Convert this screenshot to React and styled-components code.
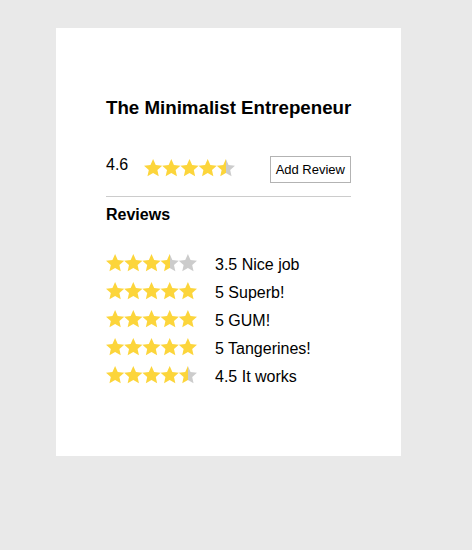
import React, { useId } from 'react'
import styled, { createGlobalStyle } from 'styled-components'

const GlobalStyle = createGlobalStyle`
  body {
    margin: 0;
    background: #e9e9e9;
    font-family: 'Liberation Sans', Arial, sans-serif;
    color: #000;
  }
`

const Card = styled.div`
  box-sizing: border-box;
  width: 345px;
  margin: 28px 0 0 56px;
  padding: 50px 50px 65px;
  background: #fff;
`

const Title = styled.h3`
  margin: 18.72px 0 0;
  font-size: 18.72px;
  font-weight: bold;
  white-space: nowrap;
`

const RatingRow = styled.div`
  display: flex;
  align-items: flex-start;
  margin-top: 37px;
`

const Score = styled.span`
  font-size: 16px;
  width: 38px;
`

const StarsWrap = styled.div`
  display: flex;
  margin-top: ${p => p.$top}px;
`

const AddButton = styled.button`
  margin-left: auto;
  padding: 5px 5px;
  font-family: 'Liberation Sans', Arial, sans-serif;
  font-size: 13px;
  background: #fff;
  border: 1px solid #b3b3b3;
  border-radius: 0;
  color: #000;
`

const Divider = styled.div`
  height: 1px;
  background: #cccccc;
  margin-top: 13px;
`

const Heading = styled.h4`
  margin: 9px 0 0;
  font-size: 16px;
  font-weight: bold;
`

const ReviewList = styled.div`
  margin-top: 27px;
  display: flex;
  flex-direction: column;
`

const ReviewRow = styled.div`
  display: flex;
  align-items: flex-start;
  height: 28px;
  font-size: 16px;
  line-height: 28px;
`

const ReviewText = styled.span`
  margin-left: 18px;
`

const R = 9.6
const PITCH = 18.2

function starPoints (cx) {
  const pts = []
  for (let i = 0; i < 10; i++) {
    const rad = i % 2 === 0 ? R : R * 0.47
    const a = (-90 + i * 36) * Math.PI / 180
    pts.push(`${(cx + rad * Math.cos(a)).toFixed(2)},${(R + rad * Math.sin(a)).toFixed(2)}`)
  }
  return pts.join(' ')
}

function Stars ({ value, top = 0 }) {
  const id = useId().replace(/:/g, '')
  const total = PITCH * 5
  const filled = Math.round(value * 2) / 2
  const pct = ((filled / 5) * 100).toFixed(2) + '%'
  return (
    <StarsWrap $top={top}>
      <svg width={total} height={18} viewBox={`0 0 ${total} 18`}>
        <defs>
          <linearGradient id={id} x1='0' x2={total} y1='0' y2='0' gradientUnits='userSpaceOnUse'>
            <stop offset={pct} stopColor='#fcd53b' />
            <stop offset={pct} stopColor='#cccccc' />
          </linearGradient>
        </defs>
        {[0, 1, 2, 3, 4].map(i => (
          <polygon key={i} points={starPoints(PITCH * i + PITCH / 2)} fill={`url(#${id})`} />
        ))}
      </svg>
    </StarsWrap>
  )
}

const reviews = [
  { rating: 3.5, text: 'Nice job' },
  { rating: 5, text: 'Superb!' },
  { rating: 5, text: 'GUM!' },
  { rating: 5, text: 'Tangerines!' },
  { rating: 4.5, text: 'It works' }
]

export default function App () {
  return (
    <>
      <GlobalStyle />
      <Card>
        <Title>The Minimalist Entrepeneur</Title>
        <RatingRow>
          <Score>4.6</Score>
          <Stars value={4.6} top={3} />
          <AddButton>Add Review</AddButton>
        </RatingRow>
        <Divider />
        <Heading>Reviews</Heading>
        <ReviewList>
          {reviews.map((r, i) => (
            <ReviewRow key={i}>
              <Stars value={r.rating} top={3} />
              <ReviewText>{r.rating} {r.text}</ReviewText>
            </ReviewRow>
          ))}
        </ReviewList>
      </Card>
    </>
  )
}
